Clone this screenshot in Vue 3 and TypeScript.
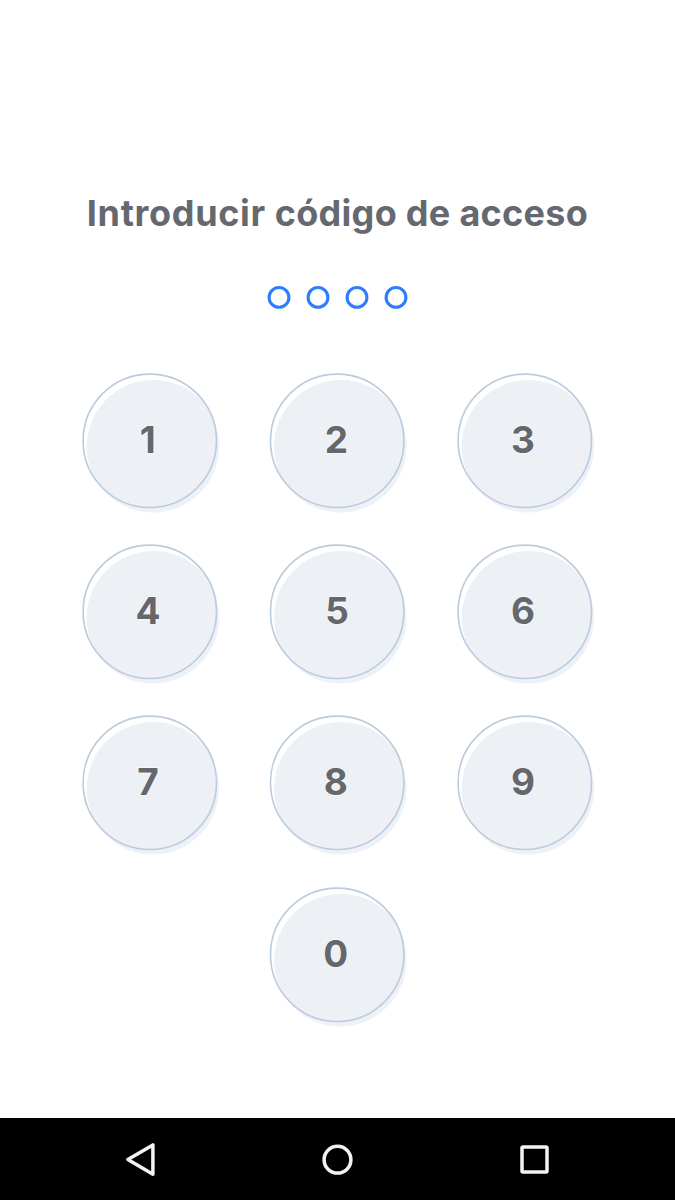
<script setup lang="ts">
interface Key { digit: string; textX: number; dx: number }

const rows: Key[][] = [
  [{ digit: '1', textX: 72.8, dx: 0 }, { digit: '2', textX: 74.4, dx: 0.4 }, { digit: '3', textX: 73, dx: 0 }],
  [{ digit: '4', textX: 73, dx: 0 }, { digit: '5', textX: 75, dx: 0.4 }, { digit: '6', textX: 73, dx: 0 }],
  [{ digit: '7', textX: 73, dx: 0 }, { digit: '8', textX: 73.8, dx: 0.4 }, { digit: '9', textX: 73, dx: 0 }],
  [{ digit: '0', textX: 73.7, dx: 0.4 }],
]
const slots = [1, 2, 3, 4]
</script>

<template>
  <div class="screen">
    <main class="lock">
      <h1 class="title"><span class="lead">Introducir</span> código de acceso</h1>
      <div class="dots">
        <svg v-for="s in slots" :key="s" class="dot" viewBox="0 0 24 24">
          <circle cx="12" cy="12.4" r="9.9" />
        </svg>
      </div>
      <div class="pad">
        <div v-for="(row, r) in rows" :key="r" class="row">
          <button v-for="k in row" :key="k.digit" class="key" type="button">
            <svg viewBox="0 0 150 150">
              <defs>
                <clipPath :id="`disc-${k.digit}`"><circle cx="74.8" cy="74.8" r="66.7" /></clipPath>
              </defs>
              <g :transform="`translate(${k.dx} 0)`">
                <circle class="shade" cx="77.8" cy="80.2" r="66.3" />
                <circle class="base" cx="74.8" cy="74.8" r="66.7" />
                <g :clip-path="`url(#disc-${k.digit})`">
                  <circle class="face" cx="78.4" cy="80.6" r="66.7" />
                </g>
                <circle class="ring" cx="74.8" cy="74.8" r="66.7" />
              </g>
              <text :x="k.textX" y="86.7">{{ k.digit }}</text>
            </svg>
          </button>
        </div>
      </div>
    </main>
    <nav class="nav">
      <svg viewBox="0 0 40 40"><path d="M7.9 20.5L32.9 5.9V35.2Z" /></svg>
      <svg viewBox="0 0 40 40"><circle cx="20.5" cy="20.7" r="13.4" /></svg>
      <svg viewBox="0 0 40 40"><rect x="8" y="8" width="25" height="25" rx="1" /></svg>
    </nav>
  </div>
</template>

<style>
body { margin: 0; background: #fff; }
</style>

<style scoped>
.screen {
  width: 675px;
  height: 1200px;
  display: flex;
  flex-direction: column;
  background: #fff;
  font-family: Inter, "Liberation Sans", sans-serif;
  overflow: hidden;
}
.lock { flex: 1; display: flex; flex-direction: column; align-items: center; }
.title {
  margin: 190px 0 0;
  height: 46px;
  line-height: 46px;
  font-size: 36px;
  font-weight: 700;
  letter-spacing: 0.3px;
  white-space: nowrap;
  color: #65696f;
}
.lead { letter-spacing: 0.68px; }
.dots { display: flex; gap: 15.15px; margin-top: 49px; }
.dot { width: 24px; height: 24px; display: block; }
.dot circle { fill: none; stroke: #2f7dff; stroke-width: 3.1; }
.pad { display: flex; flex-direction: column; align-items: center; gap: 21.2px; margin: 57px 0.4px 0 0; }
.row { display: flex; gap: 37.5px; }
.key { width: 150px; height: 150px; padding: 0; border: 0; background: none; }
.key svg { display: block; width: 150px; height: 150px; }
.shade { fill: #edf1f8; }
.base { fill: #fff; }
.face { fill: #edf0f5; }
.ring { fill: none; stroke: #bccbdd; stroke-width: 1.6; }
.key text {
  font-family: Inter, "Liberation Sans", sans-serif;
  font-size: 37px;
  font-weight: 700;
  text-anchor: middle;
  fill: #64676b;
  stroke: #f7f9fb;
  stroke-width: 1.6px;
  paint-order: stroke;
}
.nav {
  height: 82px;
  box-sizing: border-box;
  padding-right: 1px;
  display: flex;
  align-items: center;
  justify-content: center;
  gap: 157px;
  background: #000;
}
.nav svg {
  width: 40px;
  height: 40px;
  fill: none;
  stroke: #f3f3f3;
  stroke-width: 3.5;
  stroke-linejoin: round;
}
</style>
